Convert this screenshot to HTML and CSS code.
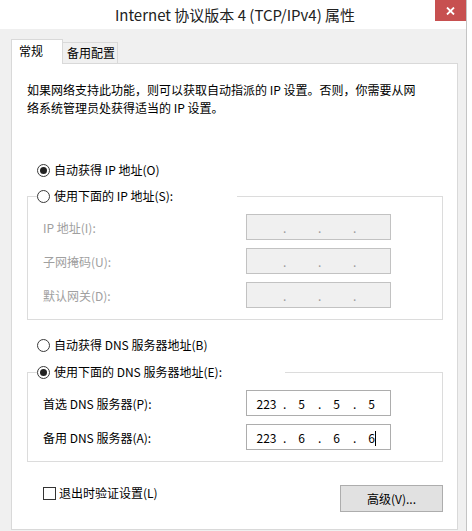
FILE: index.html
```html
<!DOCTYPE html>
<html lang="zh-CN">
<head>
    <meta charset="UTF-8">
    <meta name="viewport" content="width=device-width, initial-scale=1.0">
    <title>Internet 协议版本 4 (TCP/IPv4) 属性</title>
    <link rel="stylesheet" href="styles.css">
</head>
<body>
    <div class="window">
        <div class="titlebar">
            <span></span>
            <div class="title">Internet 协议版本 4 (TCP/IPv4) 属性</div>
            <button class="close-btn" aria-label="关闭">
                <svg width="9" height="8" viewBox="0 0 9 8"><path d="M1 0.5 L8 7.5 M8 0.5 L1 7.5" stroke="#fff" stroke-width="1.8" fill="none"/></svg>
            </button>
        </div>
        <div class="dialog">
            <div class="tabs">
                <div class="tab active">常规</div>
                <div class="tab">备用配置</div>
            </div>
            <div class="panel">
                <p class="intro">如果网络支持此功能，则可以获取自动指派的 IP 设置。否则，你需要从网<br>络系统管理员处获得适当的 IP 设置。</p>

                <label class="option option-first"><span class="radio checked"></span>自动获得 IP 地址(O)</label>

                <fieldset class="group">
                    <legend class="legend-ip"><label class="option legend-option"><span class="radio"></span>使用下面的 IP 地址(S):</label></legend>
                    <div class="field-row">
                        <span class="field-label disabled">IP 地址(I):</span>
                        <div class="ip-box disabled"><span class="octet"></span><span class="dot">.</span><span class="octet"></span><span class="dot">.</span><span class="octet"></span><span class="dot">.</span><span class="octet"></span></div>
                    </div>
                    <div class="field-row">
                        <span class="field-label disabled">子网掩码(U):</span>
                        <div class="ip-box disabled"><span class="octet"></span><span class="dot">.</span><span class="octet"></span><span class="dot">.</span><span class="octet"></span><span class="dot">.</span><span class="octet"></span></div>
                    </div>
                    <div class="field-row">
                        <span class="field-label disabled">默认网关(D):</span>
                        <div class="ip-box disabled"><span class="octet"></span><span class="dot">.</span><span class="octet"></span><span class="dot">.</span><span class="octet"></span><span class="dot">.</span><span class="octet"></span></div>
                    </div>
                </fieldset>

                <label class="option option-dns"><span class="radio"></span>自动获得 DNS 服务器地址(B)</label>

                <fieldset class="group group-dns">
                    <legend class="legend-dns"><label class="option legend-option"><span class="radio checked"></span>使用下面的 DNS 服务器地址(E):</label></legend>
                    <div class="field-row">
                        <span class="field-label">首选 DNS 服务器(P):</span>
                        <div class="ip-box"><span class="octet">223</span><span class="dot">.</span><span class="octet">5</span><span class="dot">.</span><span class="octet">5</span><span class="dot">.</span><span class="octet">5</span></div>
                    </div>
                    <div class="field-row">
                        <span class="field-label">备用 DNS 服务器(A):</span>
                        <div class="ip-box"><span class="octet">223</span><span class="dot">.</span><span class="octet">6</span><span class="dot">.</span><span class="octet">6</span><span class="dot">.</span><span class="octet">6<span class="caret"></span></span></div>
                    </div>
                </fieldset>

                <div class="footer">
                    <label class="check"><span class="checkbox"></span>退出时验证设置(L)</label>
                    <button class="btn">高级(V)...</button>
                </div>
            </div>
        </div>
    </div>
</body>
</html>
```

FILE: styles.css
```css
* {
    box-sizing: border-box;
}
body {
    margin: 0;
    background-color: #fff;
    font-family: "Noto Sans CJK SC", "Noto Sans", sans-serif;
    font-size: 12px;
    color: #000;
}
.window {
    width: 467px;
    height: 531px;
    background-color: #f0f0f0;
    border-right: 1px solid #c4c4c4;
}
.titlebar {
    height: 29px;
    background-color: #fff;
    display: grid;
    grid-template-columns: 1fr auto 1fr;
    align-items: start;
}
.title {
    font-size: 15px;
    line-height: 29px;
    color: #222;
    white-space: nowrap;
    padding-left: 4px;
}
.close-btn {
    justify-self: end;
    width: 31px;
    height: 21px;
    border: none;
    padding: 0;
    background-color: #c75050;
    display: flex;
    align-items: center;
    justify-content: center;
}
.dialog {
    padding: 10px 0 0 11px;
}
.tabs {
    display: flex;
    align-items: flex-end;
    height: 24px;
    position: relative;
    z-index: 1;
}
.tab {
    width: 56px;
    height: 21px;
    margin-left: -1px;
    padding-left: 4px;
    border: 1px solid #d9d9d9;
    border-bottom: none;
    background-color: #f0f0f0;
    line-height: 19px;
    white-space: nowrap;
}
.tab.active {
    width: 52px;
    height: 25px;
    margin-left: 0;
    margin-bottom: -1px;
    padding-left: 7px;
    background-color: #fff;
    line-height: 21px;
}
.panel {
    width: 447px;
    height: 467px;
    background-color: #fff;
    border: 1px solid #d9d9d9;
    padding: 17px 14px 0 15px;
}
.intro {
    margin: 0;
    line-height: 18px;
    white-space: nowrap;
}
.option {
    display: flex;
    align-items: center;
    gap: 4px;
    height: 20px;
    line-height: 20px;
    padding-left: 10px;
    white-space: nowrap;
}
.option-first {
    margin-top: 43px;
}
.option-dns {
    margin-top: 15px;
}
.legend-option {
    padding-left: 0;
}
.radio {
    width: 13px;
    height: 13px;
    border: 1px solid #3a3a3a;
    border-radius: 50%;
    background-color: #fff;
    display: flex;
    align-items: center;
    justify-content: center;
    flex-shrink: 0;
}
.radio.checked::after {
    content: "";
    width: 7px;
    height: 7px;
    border-radius: 50%;
    background-color: #222;
}
.group {
    margin: 6px 0 0;
    padding: 8px 0 11px 9px;
    border: 1px solid #dcdcdc;
    min-width: 0;
}
.group-dns {
    margin-top: 7px;
}
.group legend {
    padding: 0;
}
.legend-ip {
    width: 200px;
}
.legend-dns {
    width: 248px;
}
.field-row {
    display: grid;
    grid-template-columns: 203px 145px;
    align-items: center;
    padding-left: 6px;
}
.field-row + .field-row {
    margin-top: 8px;
}
.field-label.disabled {
    color: #a0a0a0;
}
.ip-box {
    height: 26px;
    border: 1px solid #adadad;
    background-color: #fff;
    display: flex;
    align-items: center;
    padding-left: 3px;
}
.ip-box.disabled {
    background-color: #f0f0f0;
    border-color: #c2c2c2;
    color: #9a9a9a;
}
.octet {
    width: 33px;
    text-align: center;
}
.dot {
    width: 2px;
}
.caret {
    display: inline-block;
    width: 0;
    height: 15px;
    border-left: 1px solid #000;
    margin-right: -1px;
    vertical-align: -3px;
}
.footer {
    display: flex;
    justify-content: space-between;
    align-items: flex-start;
    margin-top: 23px;
    padding-left: 16px;
}
.check {
    display: flex;
    align-items: center;
    gap: 3px;
    height: 16px;
    line-height: 16px;
}
.checkbox {
    width: 13px;
    height: 13px;
    border: 1px solid #333;
    background-color: #fff;
}
.btn {
    width: 103px;
    height: 27px;
    border: 1px solid #adadad;
    background-color: #e1e1e1;
    font-family: inherit;
    font-size: 12px;
    color: #000;
    padding: 0;
}
```
